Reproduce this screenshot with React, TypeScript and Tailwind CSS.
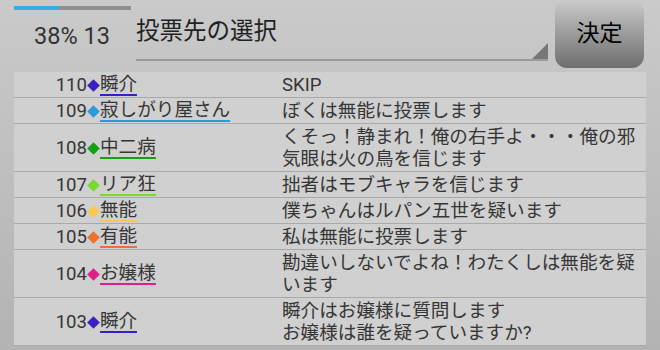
import React from "react";

type Row = { no: number; name: string; color: string; lines: string[] };

const rows: Row[] = [
  { no: 110, name: "瞬介", color: "#3a20c0", lines: ["SKIP"] },
  { no: 109, name: "寂しがり屋さん", color: "#2b9bd9", lines: ["ぼくは無能に投票します"] },
  { no: 108, name: "中二病", color: "#15a015", lines: ["くそっ！静まれ！俺の右手よ・・・俺の邪", "気眼は火の鳥を信じます"] },
  { no: 107, name: "リア狂", color: "#78d935", lines: ["拙者はモブキャラを信じます"] },
  { no: 106, name: "無能", color: "#fcc850", lines: ["僕ちゃんはルパン五世を疑います"] },
  { no: 105, name: "有能", color: "#ee7030", lines: ["私は無能に投票します"] },
  { no: 104, name: "お嬢様", color: "#e0208a", lines: ["勘違いしないでよね！わたくしは無能を疑", "います"] },
  { no: 103, name: "瞬介", color: "#3a20c0", lines: ["瞬介はお嬢様に質問します", "お嬢様は誰を疑っていますか?"] },
];

export default function App() {
  return (
    <div
      className="w-[660px] h-[350px] overflow-hidden bg-gradient-to-b from-[#cacaca] to-[#b3b3b3]"
      style={{ fontFamily: 'Roboto, "Noto Sans CJK JP", sans-serif' }}
    >
      {/* header */}
      <div className="flex h-[72px]">
        <div className="w-[136px] pl-[14px] flex flex-col">
          <div className="mt-[6px] w-[117px] h-[4px] bg-[#8f8f8f] flex">
            <div className="w-[45px] h-full bg-[#38ade0]" />
          </div>
          <div className="mt-[14px] pl-[20px] text-[23.5px] leading-[24px] text-[#333333]">38% 13</div>
        </div>
        <div className="w-[412px] h-[61px] border-b-[2px] border-[#9a9a9a] relative">
          <div className="pt-[16px] text-[23.5px] leading-[30px] text-[#222222]">投票先の選択</div>
          <div className="absolute right-0 bottom-0 w-0 h-0 border-l-[16px] border-l-transparent border-b-[16px] border-b-[#777777]" />
        </div>
        <div className="ml-[7px] w-[89px] h-[68px] rounded-[12px] bg-gradient-to-b from-[#cbcbcb] to-[#6e6e6e] flex items-center justify-center">
          <span className="text-[23px] leading-[28px] text-black">決定</span>
        </div>
      </div>
      {/* list */}
      <div className="mx-[14px] bg-[#d0d0d0]">
        {rows.map((r, i) => (
          <div key={i} className="flex border-b border-[#a9a9a9] pt-[2px] pb-[1px] text-[#363636] text-[18.6px]">
            <div className="w-[268px] flex items-center">
              <div className="w-[73px] text-right leading-[22px]">{r.no}</div>
              <div className="w-[13px] flex justify-center">
                <div className="w-[9px] h-[9px] rotate-45" style={{ backgroundColor: r.color }} />
              </div>
              <div className="leading-[20px] border-b-[2px]" style={{ borderColor: r.color }}>
                {r.name}
              </div>
            </div>
            <div className="flex-1 leading-[22px] whitespace-nowrap">
              {r.lines.map((l, j) => (
                <div key={j}>{l}</div>
              ))}
            </div>
          </div>
        ))}
      </div>
    </div>
  );
}
